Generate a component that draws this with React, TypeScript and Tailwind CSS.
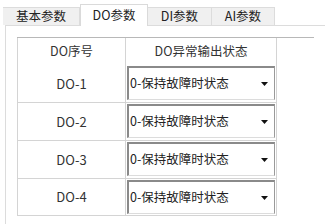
import React from 'react';

const tabs = [
  { label: '基本参数', w: 'w-[77px]' },
  { label: 'DO参数', w: 'w-[68px]', active: true },
  { label: 'DI参数', w: 'w-[64px]' },
  { label: 'AI参数', w: 'w-[63px]' },
];

const rows = [
  { name: 'DO-1', h: 'h-[37px]' },
  { name: 'DO-2', h: 'h-[38px]' },
  { name: 'DO-3', h: 'h-[38px]' },
  { name: 'DO-4', h: 'h-[37px]' },
];

function Select() {
  return (
    <div className="flex h-[34px] w-[148px] items-center border-t-2 border-l-2 border-r border-b border-t-[#8a8a8a] border-l-[#8a8a8a] border-r-[#9a9a9a] border-b-[#dcdcdc] bg-white pl-[1px] pr-[6px]">
      <span className="flex-1 text-[12.5px] leading-none text-[#222]">0-保持故障时状态</span>
      <svg width="7" height="4" viewBox="0 0 7 4" className="mt-[1px]">
        <polygon points="0,0 7,0 3.5,4" fill="#111" />
      </svg>
    </div>
  );
}

export default function App() {
  return (
    <div
      className="relative h-[224px] w-[325px] overflow-hidden bg-white"
      style={{ fontFamily: '"Noto Sans CJK SC", "Noto Sans", sans-serif' }}
    >
      {/* tab strip */}
      <div className="flex h-[25px] items-end pl-[3px]">
        {tabs.map((t) =>
          t.active ? (
            <div
              key={t.label}
              className={`${t.w} relative z-10 -mb-px flex h-[22px] items-center justify-center border-x border-t border-[#dadada] bg-white text-[12.5px] text-[#222]`}
            >
              {t.label}
            </div>
          ) : (
            <div
              key={t.label}
              className={`${t.w} flex h-[18px] items-center justify-center border-t border-r border-[#dcdcdc] bg-[#f0f0f0] text-[12.5px] text-[#222]`}
            >
              {t.label}
            </div>
          )
        )}
      </div>

      {/* panel */}
      <div className="ml-[5px] h-[199px] border-l border-t border-[#dcdcdc] bg-white pt-[11px]">
        <div className="ml-[11px] w-[297px] border-t border-[#b8b8b8]">
          <div className="w-[260px] border-l border-r border-b border-[#d4d4d4]">
            <div className="flex h-[27px] text-[12.5px] text-[#333]">
              <div className="flex w-[108px] items-center justify-center border-r border-[#d4d4d4]">DO序号</div>
              <div className="flex flex-1 items-center justify-center">DO异常输出状态</div>
            </div>
            {rows.map((r, i) => (
              <div
                key={r.name}
                className={`flex ${r.h} ${i > 0 ? 'border-t border-[#d4d4d4]' : ''}`}
              >
                <div className="flex w-[108px] items-center justify-center border-r border-[#d4d4d4] text-[13px] text-[#333]">
                  {r.name}
                </div>
                <div className="flex flex-1 items-start pl-[1px] pt-[1px]">
                  <Select />
                </div>
              </div>
            ))}
          </div>
        </div>
      </div>
    </div>
  );
}
